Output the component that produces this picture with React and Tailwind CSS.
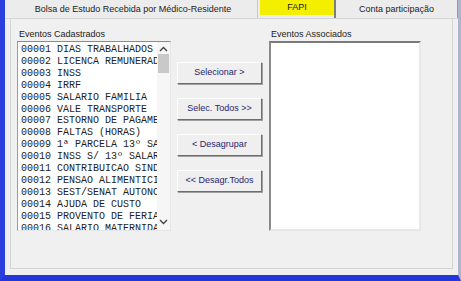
import React from "react";

const eventos = [
  "00001 DIAS TRABALHADOS",
  "00002 LICENCA REMUNERADA",
  "00003 INSS",
  "00004 IRRF",
  "00005 SALARIO FAMILIA",
  "00006 VALE TRANSPORTE",
  "00007 ESTORNO DE PAGAMENTO",
  "00008 FALTAS (HORAS)",
  "00009 1ª PARCELA 13º SALARIO",
  "00010 INSS S/ 13º SALARIO",
  "00011 CONTRIBUICAO SINDICAL",
  "00012 PENSAO ALIMENTICIA",
  "00013 SEST/SENAT AUTONOMO",
  "00014 AJUDA DE CUSTO",
  "00015 PROVENTO DE FERIAS",
  "00016 SALARIO MATERNIDADE",
];

const botoes = ["Selecionar >", "Selec. Todos >>", "< Desagrupar", "<< Desagr.Todos"];

function Chevron({ up }) {
  return (
    <svg width="9" height="6" viewBox="0 0 9 6" className="block">
      <path
        d={up ? "M1 5 L4.5 1.5 L8 5" : "M1 1 L4.5 4.5 L8 1"}
        fill="none"
        stroke="#444"
        strokeWidth="1.4"
      />
    </svg>
  );
}

function WinButton({ label }) {
  return (
    <button
      type="button"
      className="flex h-[22px] w-[85px] items-center justify-center border border-t-white border-l-white border-r-[#6e6e6e] border-b-[#6e6e6e] bg-[#efefef] text-[9px] text-[#26266e] shadow-[1px_1px_0_#a0a0a0]"
    >
      {label}
    </button>
  );
}

export default function App() {
  return (
    <div
      className="flex h-[281px] w-[461px] flex-col overflow-hidden border-b-[6px] border-l-[5px] border-r-[3px] border-b-[#2236d9] border-l-[#2a3fdc] border-r-[#aeb3d2] bg-[#f0f0f0] text-[#222]"
      style={{ fontFamily: "'Liberation Sans', Arial, sans-serif" }}
    >
      {/* abas */}
      <div className="flex h-[19px] shrink-0 border-b border-[#d6d6d6] bg-[#ececec] text-[9px]">
        <div className="flex w-[253px] items-center justify-center border-r border-[#c8c8c8] pl-[4px] pt-[1px]">
          Bolsa de Estudo Recebida por Médico-Residente
        </div>
        <div className="flex w-[78px] items-start justify-center border-r-2 border-[#7d7d7d] pl-[2px]">
          <div className="flex h-[15px] w-full items-center justify-center bg-[#f4ef00]">FAPI</div>
        </div>
        <div className="flex flex-1 items-center justify-center border-r border-[#9a9a9a] pt-[1px]">
          Conta participação
        </div>
      </div>

      {/* corpo */}
      <div className="flex flex-1 px-[5px] pb-[6px]">
        <div className="flex flex-1 gap-[6px] border-b border-l border-r border-[#d4d4d4] pl-[6px] pt-[9px]">
          {/* lista esquerda */}
          <div className="flex flex-col">
            <div className="h-[13px] pl-[2px] text-[9px] leading-[12px]">Eventos Cadastrados</div>
            <div className="flex h-[190px] w-[154px] border border-b-[#e6e6e6] border-l-[#9c9c9c] border-r-[#e6e6e6] border-t-[#8c8c8c] bg-white">
              <div
                className="flex-1 overflow-hidden pl-[3px] pt-[2px] text-[10px] leading-[11.9px] text-[#222]"
                style={{ fontFamily: "'Liberation Mono', 'Courier New', monospace" }}
              >
                {eventos.map((e) => (
                  <div key={e} className="whitespace-nowrap">
                    {e}
                  </div>
                ))}
              </div>
              <div className="flex w-[13px] flex-col items-center bg-[#f6f6f6] pt-[4px]">
                <Chevron up />
                <div className="mt-[2px] h-[19px] w-[11px] bg-[#c9c9c9]" />
                <div className="flex-1" />
                <div className="pb-[5px]">
                  <Chevron />
                </div>
              </div>
            </div>
          </div>

          {/* botões */}
          <div className="flex flex-col gap-[14px] pt-[34px]">
            {botoes.map((b) => (
              <WinButton key={b} label={b} />
            ))}
          </div>

          {/* lista direita */}
          <div className="ml-[1px] flex flex-col">
            <div className="h-[13px] pl-[2px] text-[9px] leading-[12px]">Eventos Associados</div>
            <div className="h-[190px] w-[152px] border-2 border-b-[#e8e8e8] border-l-[#8a8a8a] border-r-[#e8e8e8] border-t-[#7a7a7a] bg-white" />
          </div>
        </div>
      </div>
    </div>
  );
}
